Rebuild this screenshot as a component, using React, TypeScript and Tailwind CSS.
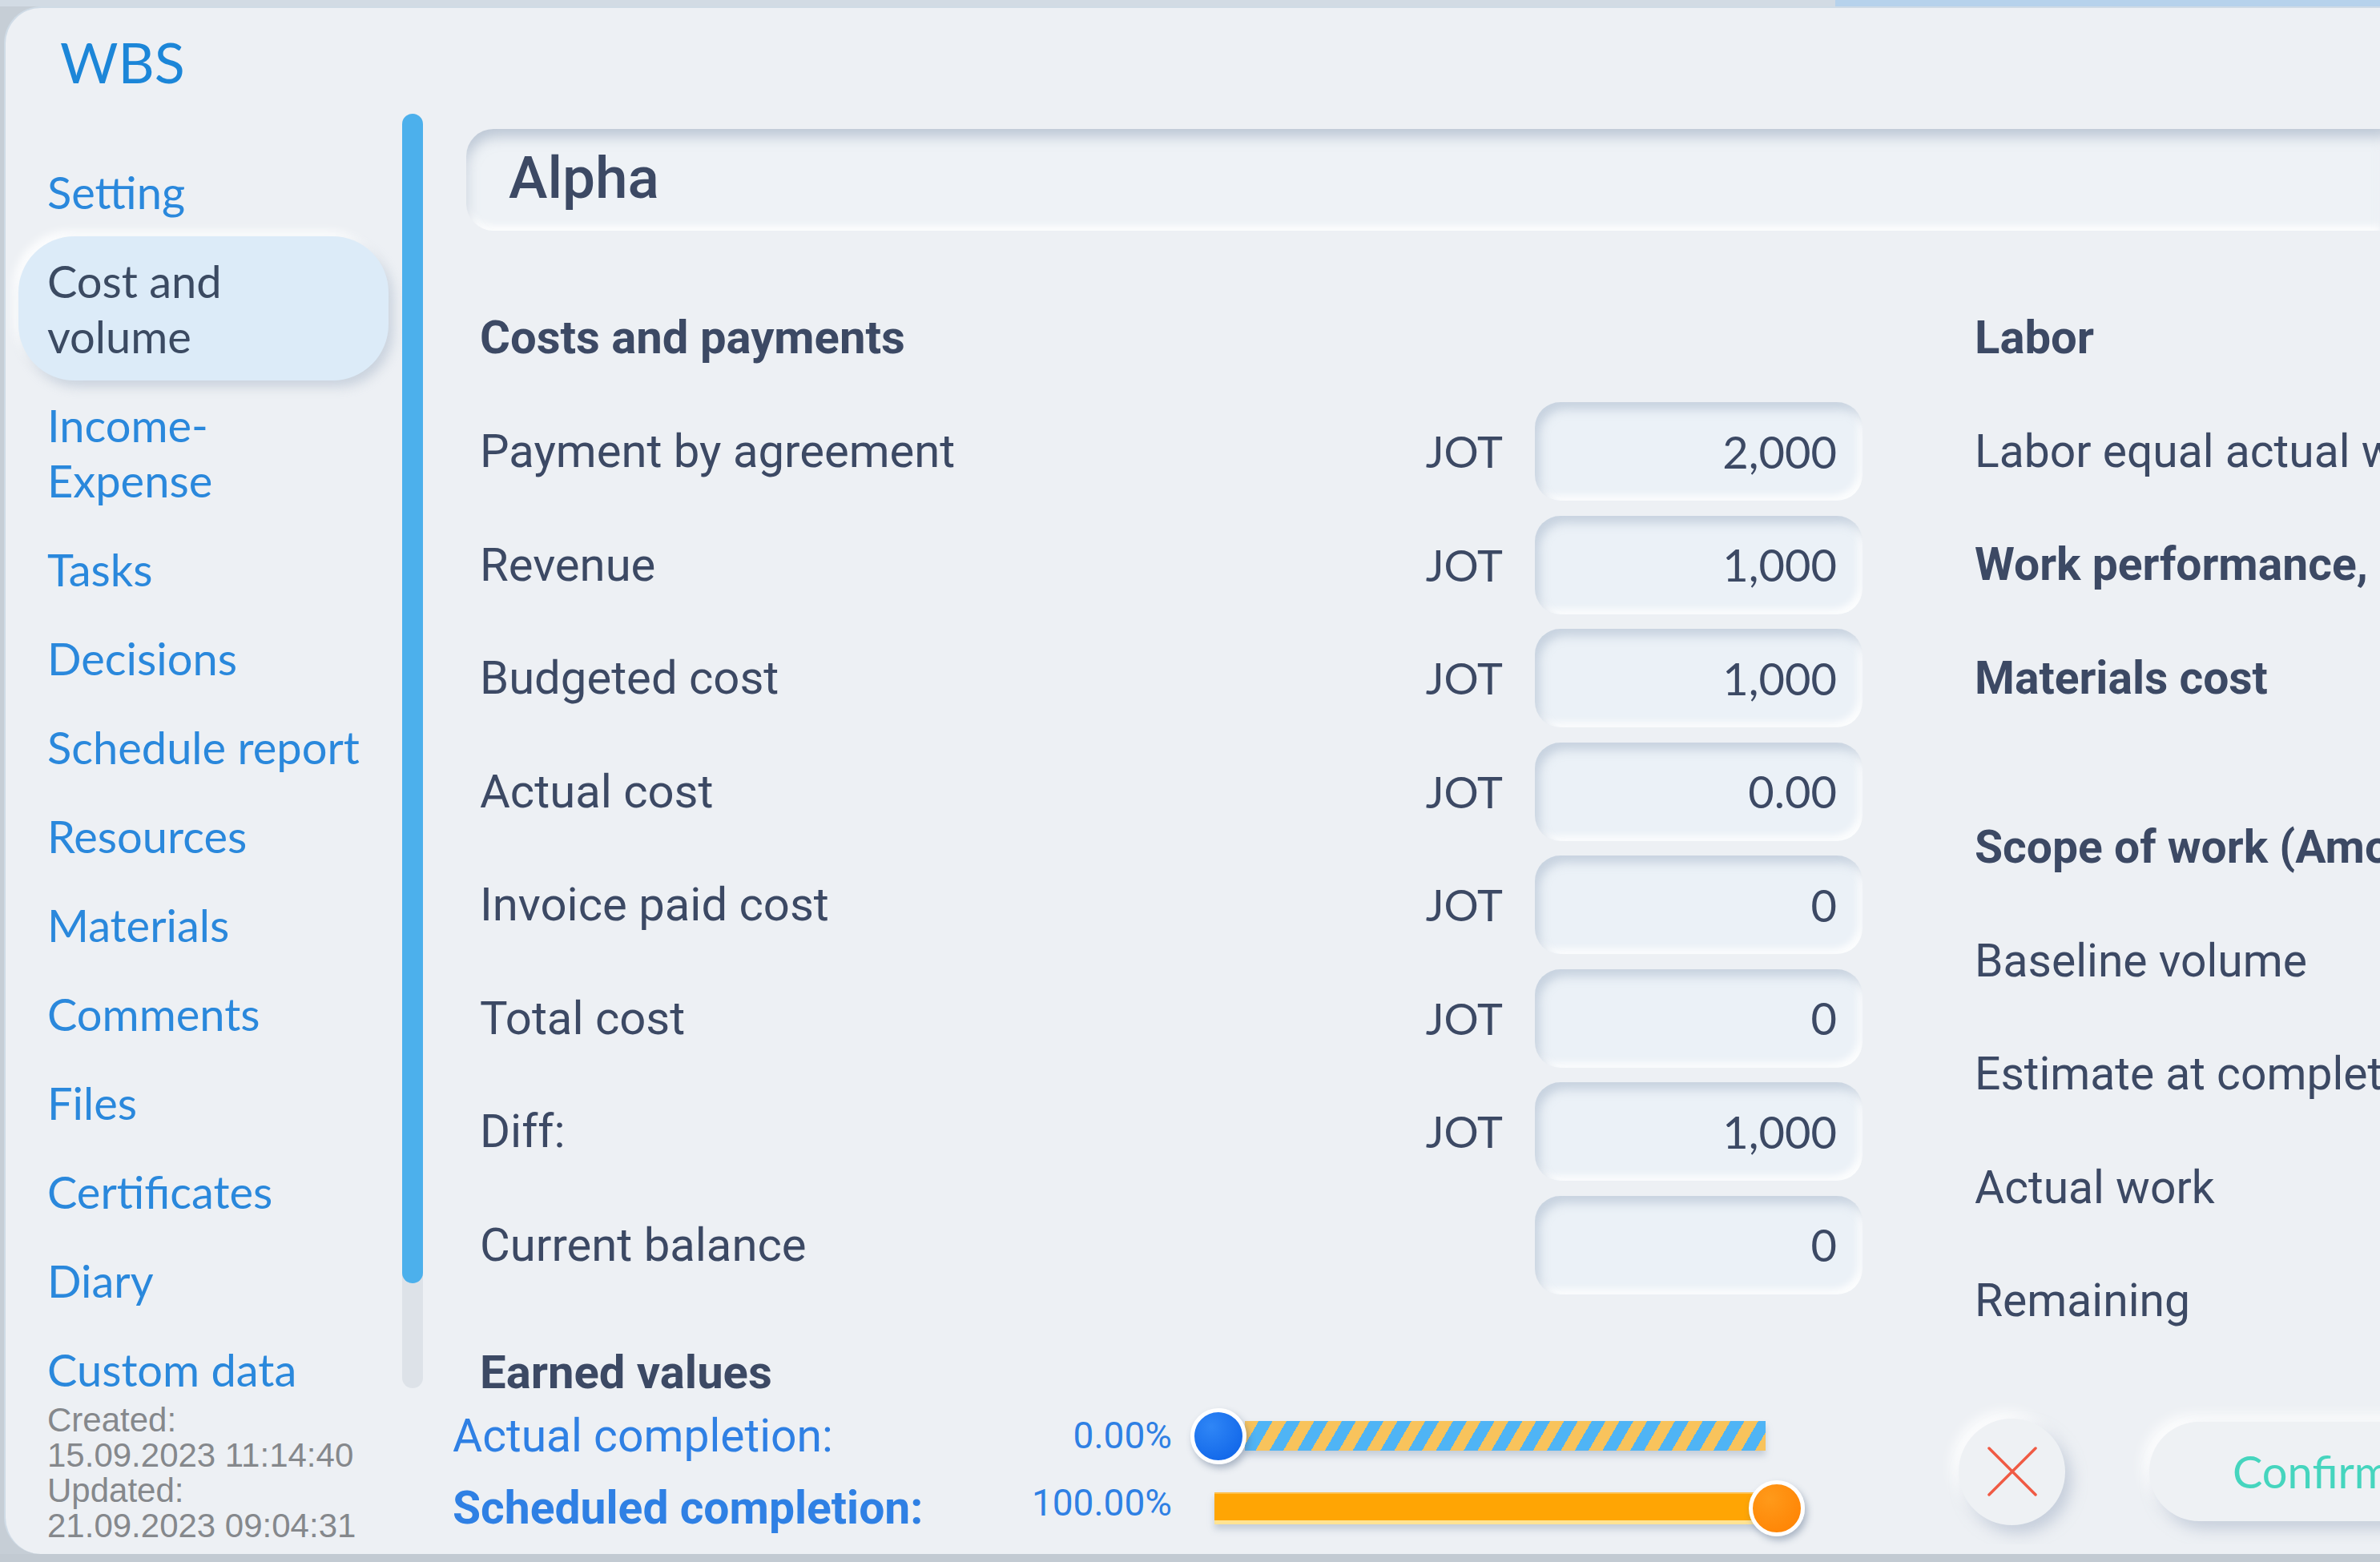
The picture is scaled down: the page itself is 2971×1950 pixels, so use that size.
import React from "react";

const navItems: { label: React.ReactNode; active?: boolean }[] = [
  { label: "Setting" },
  { label: <>Cost and<br />volume</>, active: true },
  { label: <>Income-<br />Expense</> },
  { label: "Tasks" },
  { label: "Decisions" },
  { label: "Schedule report" },
  { label: "Resources" },
  { label: "Materials" },
  { label: "Comments" },
  { label: "Files" },
  { label: "Certificates" },
  { label: "Diary" },
  { label: "Custom data" },
];

const rows: { label: string; jot: boolean; value: string }[] = [
  { label: "Payment by agreement", jot: true, value: "2,000" },
  { label: "Revenue", jot: true, value: "1,000" },
  { label: "Budgeted cost", jot: true, value: "1,000" },
  { label: "Actual cost", jot: true, value: "0.00" },
  { label: "Invoice paid cost", jot: true, value: "0" },
  { label: "Total cost", jot: true, value: "0" },
  { label: "Diff:", jot: true, value: "1,000" },
  { label: "Current balance", jot: false, value: "0" },
];

export default function App() {
  return (
    <div className="w-[2971px] h-[1950px] flex flex-col bg-[#c6ced6] overflow-hidden">
      <div className="h-[8px] flex shrink-0">
        <div className="flex-1 bg-[#d2dbe4]" />
        <div className="w-[680px] bg-[#b6d2ec]" />
      </div>
      <div className="flex-1 min-h-0 ml-[5px] rounded-tl-[46px] rounded-bl-[46px] bg-[#edf0f4] border-l-[2px] border-t-[2px] border-[#cfdbe6] flex overflow-hidden">
        {/* Sidebar */}
        <div className="w-[495px] shrink-0 flex flex-col">
          <div className="pl-[68px] pt-[27px] h-[109px] text-[70px] leading-[80px] text-[#1c86d8] font-['Lato',sans-serif]">
            WBS
          </div>
          <div className="mt-[65px] ml-[16px] w-[462px] flex flex-col font-['Lato',sans-serif] text-[56px] leading-[69px]">
            {navItems.map((it, i) => (
              <div
                key={i}
                className={
                  it.active
                    ? "py-[21px] pl-[36px] rounded-[70px] bg-[#dcebf8] text-[#3b4a62] shadow-[6px_8px_14px_rgba(160,175,195,0.45),-6px_-6px_12px_rgba(255,255,255,0.95)]"
                    : "py-[21px] pl-[36px] text-[#2a88dc]"
                }
              >
                {it.label}
              </div>
            ))}
          </div>
          <div className="-mt-[14px] pl-[52px] font-['Liberation_Sans',sans-serif] text-[42px] leading-[44px] text-[#85888c]">
            <div>Created:</div>
            <div>15.09.2023 11:14:40</div>
            <div>Updated:</div>
            <div>21.09.2023 09:04:31</div>
          </div>
        </div>

        {/* Scrollbar */}
        <div className="w-[26px] shrink-0 mt-[132px] h-[1591px] rounded-full bg-[#dde2e8] flex flex-col">
          <div className="h-[1460px] rounded-full bg-[#4cb0ec]" />
        </div>

        {/* Main */}
        <div className="flex-1 min-w-0 pl-[54px] pt-[151px] flex flex-col font-['Roboto',sans-serif] text-[#3c4964]">
          <div className="h-[127px] shrink-0 rounded-l-[34px] bg-[#eef2f6] shadow-[inset_4px_14px_16px_-4px_rgba(150,166,188,0.55),inset_0_-6px_10px_rgba(255,255,255,0.9)] flex items-center pl-[53px] pb-[4px]">
            <span className="text-[73px] font-medium leading-none">Alpha</span>
          </div>

          <div className="flex">
            {/* Left section */}
            <div className="w-[1743px] shrink-0 pl-[17px] flex flex-col">
              <div className="mt-[98px] h-[70px] leading-[70px] text-[58px] font-bold">Costs and payments</div>
              <div className="mt-[46px] flex flex-col gap-[18.5px]">
                {rows.map((r, i) => (
                  <div key={i} className="h-[123px] flex items-center">
                    <div className="flex-1 text-[58px]">{r.label}</div>
                    {r.jot && (
                      <div className="font-['Lato',sans-serif] text-[54px] mr-[40px]">JOT</div>
                    )}
                    <div className="w-[409px] h-[123px] rounded-[32px] bg-[#ebf1f7] shadow-[inset_6px_9px_12px_rgba(165,182,202,0.5),inset_-5px_-6px_10px_rgba(255,255,255,0.95)] flex items-center justify-end pr-[32px] font-['Lato',sans-serif] text-[56px]">
                      {r.value}
                    </div>
                  </div>
                ))}
              </div>
              <div className="mt-[62px] h-[70px] leading-[70px] text-[58px] font-bold">Earned values</div>
              <div className="-ml-[34px] flex flex-col text-[#2f80e4]">
                <div className="h-[90px] flex items-center">
                  <div className="w-[898px] flex items-center justify-between">
                    <span className="text-[57px]">Actual completion:</span>
                    <span className="text-[46px]">0.00%</span>
                  </div>
                  <div className="ml-[23px] w-[770px] h-[90px] relative">
                    <div className="absolute left-[68px] top-[26px] w-[650px] h-[37px] bg-[repeating-linear-gradient(120deg,#f8c35c_0px,#f8c35c_15px,#4fb4f5_15px,#4fb4f5_30px)] shadow-[0_6px_8px_rgba(120,140,165,0.35)]" />
                    <div className="absolute left-0 top-[10px] w-[70px] h-[70px] rounded-full border-[5px] border-white bg-[radial-gradient(circle_at_35%_30%,#2f86f6,#0b60e6)] shadow-[3px_5px_8px_rgba(90,110,140,0.45)]" />
                  </div>
                </div>
                <div className="h-[90px] flex items-center">
                  <div className="w-[898px] flex items-center justify-between">
                    <span className="text-[57px] font-bold">Scheduled completion:</span>
                    <span className="text-[46px] -mt-[12px]">100.00%</span>
                  </div>
                  <div className="ml-[23px] w-[770px] h-[90px] relative">
                    <div className="absolute left-[30px] top-[25px] w-[701px] h-[40px] bg-[#ffa504] border-t-[2px] border-[#ffc04a] border-b-[5px] border-b-[#ffe393] shadow-[0_6px_8px_rgba(120,140,165,0.35)]" />
                    <div className="absolute left-[697px] top-[10px] w-[70px] h-[70px] rounded-full border-[5px] border-white bg-[radial-gradient(circle_at_35%_30%,#ff9a1a,#ff8000)] shadow-[3px_5px_8px_rgba(90,110,140,0.45)]" />
                  </div>
                </div>
              </div>
            </div>

            {/* Right section */}
            <div className="flex-1 min-w-0 pl-[140px] flex flex-col whitespace-nowrap overflow-hidden">
              <div className="mt-[98px] h-[70px] leading-[70px] text-[58px] font-bold">Labor</div>
              <div className="mt-[46px] flex flex-col gap-[18.5px] text-[57px]">
                <div className="h-[123px] flex items-center">Labor equal actual work</div>
                <div className="h-[123px] flex items-center font-bold">Work performance, plan</div>
                <div className="h-[123px] flex items-center font-bold">Materials cost</div>
                <div className="h-[123px] mt-[70px] flex items-center font-bold">Scope of work (Amount)</div>
                <div className="h-[123px] flex items-center">Baseline volume</div>
                <div className="h-[123px] flex items-center">Estimate at completion</div>
                <div className="h-[123px] flex items-center">Actual work</div>
                <div className="h-[123px] flex items-center">Remaining</div>
              </div>
              <div className="mt-[85px] -ml-[20px] flex items-center gap-[105px]">
                <div className="w-[133px] h-[133px] shrink-0 rounded-full bg-[#eef1f4] shadow-[8px_10px_18px_rgba(160,174,195,0.5),-8px_-8px_16px_rgba(255,255,255,0.95)] flex items-center justify-center">
                  <svg width="66" height="66" viewBox="0 0 66 66">
                    <path d="M4 4 L62 62 M62 4 L4 62" stroke="#f05a44" strokeWidth="3.5" strokeLinecap="round" />
                  </svg>
                </div>
                <div className="w-[600px] h-[124px] shrink-0 rounded-full bg-[#eef1f4] shadow-[8px_10px_18px_rgba(160,174,195,0.5),-8px_-8px_16px_rgba(255,255,255,0.95)] flex items-center pl-[104px] font-['Lato',sans-serif] text-[56px] text-[#45d5be]">
                  Confirm
                </div>
              </div>
            </div>
          </div>
        </div>
      </div>
      <div className="h-[10px] bg-[#c2cad2] shrink-0" />
    </div>
  );
}
